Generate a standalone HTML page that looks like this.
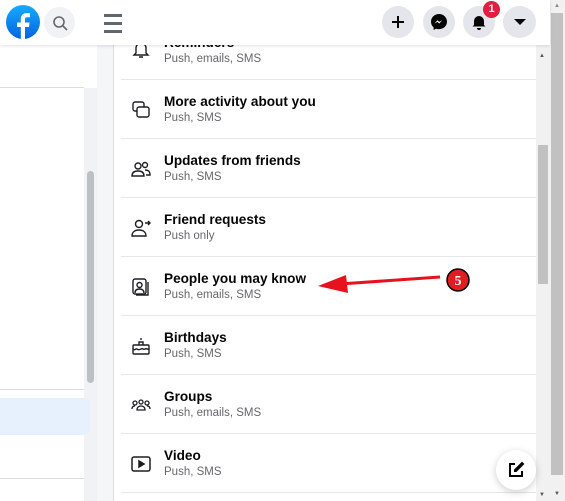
<!DOCTYPE html>
<html><head><meta charset="utf-8"><style>
*{margin:0;padding:0;box-sizing:border-box}
body{width:565px;height:501px;overflow:hidden;background:#fff;font-family:"Liberation Sans",Arial,sans-serif;position:relative}
.abs{position:absolute}
.hdr{left:0;top:0;width:550px;height:45px;background:#fff;box-shadow:0 1px 3px rgba(0,0,0,.12);z-index:5}
.cb{width:32px;height:32px;border-radius:50%;background:#e4e6eb;display:flex;align-items:center;justify-content:center;top:6px}
.row{position:absolute;left:121px;width:415px;height:59px;border-bottom:1px solid #e4e6eb}
.row .t{position:absolute;left:43px;top:14px;font-size:13.6px;font-weight:bold;color:#050505}
.row .s{position:absolute;left:43px;top:32px;font-size:11.5px;color:#65676b}
.row svg{position:absolute;left:10px;top:20px}
</style></head><body>
<div class="abs" style="left:0;top:45px;width:97px;height:456px;background:#fff"></div>
<div class="abs" style="left:0;top:87px;width:84px;height:1px;background:#dadde1"></div>
<div class="abs" style="left:84px;top:88px;width:13px;height:413px;background:#f0f2f5"></div>
<div class="abs" style="left:87px;top:171px;width:7px;height:212px;border-radius:4px;background:#bcc0c4"></div>
<div class="abs" style="left:0;top:389px;width:84px;height:1px;background:#dadde1"></div>
<div class="abs" style="left:0;top:398px;width:90px;height:37px;border-radius:0 6px 6px 0;background:#e7f0fd"></div>
<div class="abs" style="left:0;top:478px;width:84px;height:1px;background:#dadde1"></div>
<div class="abs" style="left:97px;top:45px;width:16px;height:456px;background:#f5f6f7"></div>
<div class="abs" style="left:113px;top:45px;width:1px;height:456px;background:#dadde1"></div>
<div class="row" style="top:21px"><svg width="20" height="20" viewBox="0 0 20 20" fill="none" stroke="#1c1e21" stroke-width="1.4" style="top:18px"><path d="M5 14V9a5 5 0 0110 0v5l2 2H3z M8 18h4"/></svg><div class="t">Reminders</div><div class="s">Push, emails, SMS</div></div>
<div class="row" style="top:80px"><svg width="20" height="20" viewBox="0 0 20 20" fill="none" stroke="#1c1e21" stroke-width="1.4"><rect x="2" y="2" width="11" height="9" rx="2"/><rect x="6" y="7" width="12" height="10" rx="2" fill="#fff"/></svg><div class="t">More activity about you</div><div class="s">Push, SMS</div></div>
<div class="row" style="top:139px"><svg width="20" height="20" viewBox="0 0 20 20" fill="none" stroke="#1c1e21" stroke-width="1.4"><circle cx="7" cy="7" r="3"/><path d="M1 17c0-4 3-5 6-5s6 1 6 5z"/><circle cx="14" cy="6" r="2.5"/><path d="M14 11c3 0 5 1 5 5h-4"/></svg><div class="t">Updates from friends</div><div class="s">Push, SMS</div></div>
<div class="row" style="top:198px"><svg width="20" height="20" viewBox="0 0 20 20" fill="none" stroke="#1c1e21" stroke-width="1.4"><circle cx="8" cy="6" r="3.5"/><path d="M1 18c0-4 3-6 7-6s7 2 7 6z M14 5h5 M17 3l2 2-2 2"/></svg><div class="t">Friend requests</div><div class="s">Push only</div></div>
<div class="row" style="top:257px"><svg width="20" height="20" viewBox="0 0 20 20" fill="none" stroke="#1c1e21" stroke-width="1.4"><rect x="2" y="2" width="13" height="15" rx="2"/><circle cx="8.5" cy="8" r="2.5"/><path d="M4 16c0-3 2-4 4.5-4s4.5 1 4.5 4 M17 5v13H5"/></svg><div class="t">People you may know</div><div class="s">Push, emails, SMS</div></div>
<div class="row" style="top:316px"><svg width="20" height="20" viewBox="0 0 20 20" fill="none" stroke="#1c1e21" stroke-width="1.4"><rect x="2" y="9" width="16" height="9" rx="1"/><path d="M2 13c2 2 3-1 4 0s2 1 4 0 2 1 4 0 3 1 4 0 M8 9V6h4v3 M10 2v2"/></svg><div class="t">Birthdays</div><div class="s">Push, SMS</div></div>
<div class="row" style="top:375px"><svg width="20" height="20" viewBox="0 0 20 20" fill="none" stroke="#1c1e21" stroke-width="1.3"><circle cx="4" cy="8" r="2"/><circle cx="10" cy="7" r="2"/><circle cx="16" cy="8" r="2"/><path d="M1 14c0-2 1-3 3-3M19 14c0-2-1-3-3-3M6 15c0-3 2-4 4-4s4 1 4 4z"/></svg><div class="t">Groups</div><div class="s">Push, emails, SMS</div></div>
<div class="row" style="top:434px"><svg width="20" height="20" viewBox="0 0 20 20" fill="none" stroke="#1c1e21" stroke-width="1.5"><rect x="1" y="3" width="18" height="14" rx="2"/><path d="M8 7v6l5-3z" fill="#1c1e21"/></svg><div class="t">Video</div><div class="s">Push, SMS</div></div>
<div class="abs" style="left:536px;top:45px;width:14px;height:456px;background:#f1f1f1"></div>
<div class="abs" style="left:538px;top:145px;width:10px;height:139px;background:#c1c1c1"></div>
<div class="abs" style="left:539px;top:53px;font-size:6px;color:#555">▲</div>
<div class="abs" style="left:539px;top:492px;font-size:6px;color:#555">▼</div>
<div class="abs" style="left:550px;top:0;width:15px;height:501px;background:#f1f1f1"></div>
<div class="abs" style="left:551px;top:13px;width:12px;height:462px;background:#c1c1c1"></div>
<div class="abs" style="left:554px;top:3px;font-size:6px;color:#888">▲</div>
<div class="abs" style="left:554px;top:491px;font-size:6px;color:#555">▼</div>
<svg class="abs" style="left:310px;top:262px" width="170" height="40"><path d="M130 15 L30 22" stroke="#e8121f" stroke-width="3"/><path d="M8 24 L36 13 L38 31z" fill="#e8121f"/><circle cx="148" cy="18" r="11" fill="#e31b23" stroke="#000" stroke-width="1.5"/><text x="148" y="23" font-family="Liberation Serif,serif" font-size="14" font-weight="bold" fill="#fff" text-anchor="middle">5</text></svg>
<div class="abs" style="left:496px;top:450px;width:40px;height:40px;border-radius:50%;background:#fff;box-shadow:0 2px 8px rgba(0,0,0,.2);display:flex;align-items:center;justify-content:center"><svg width="18" height="18" viewBox="0 0 18 18" fill="none" stroke="#050505" stroke-width="2"><path d="M8 3H3v12h12v-5"/><path d="M15 2l1 1-7 7H8V9z" fill="#050505"/></svg></div>
<div class="abs hdr">
 <svg class="abs" style="left:6px;top:5px" width="34" height="34" viewBox="0 0 34 34"><defs><linearGradient id="g" x1="0" y1="0" x2="0" y2="1"><stop offset="0" stop-color="#18acfe"/><stop offset="1" stop-color="#0163e0"/></linearGradient></defs><circle cx="17" cy="17" r="17" fill="url(#g)"/><path d="M19 34V22h4l.6-4.5H19v-3c0-1.3.4-2.2 2.3-2.2H24V8.3c-.5-.1-1.9-.2-3.5-.2-3.4 0-5.7 2-5.7 5.9v3.5H11V22h3.8v12z" fill="#fff"/></svg>
 <div class="abs cb" style="left:44px;width:31px;height:31px;top:7px;background:#f0f2f5"><svg width="16" height="16" viewBox="0 0 16 16" fill="none" stroke="#65676b" stroke-width="1.6"><circle cx="7" cy="7" r="5"/><path d="M11 11l4 4"/></svg></div>
 <div class="abs" style="left:104px;top:14px;width:18px;height:3px;background:#606770;box-shadow:0 8px 0 #606770,0 16px 0 #606770"></div>
 <div class="abs cb" style="left:382px;width:32px"><svg width="14" height="14" viewBox="0 0 14 14" stroke="#050505" stroke-width="2"><path d="M7 1v12M1 7h12"/></svg></div>
 <div class="abs cb" style="left:423px"><svg width="18" height="18" viewBox="0 0 18 18"><path d="M9 1C4.5 1 1 4.3 1 8.7c0 2.3 1 4.3 2.6 5.7V17l2.4-1.3c1 .3 2 .4 3 .4 4.5 0 8-3.3 8-7.5S13.5 1 9 1z" fill="#050505"/><path d="M4.5 10.5l3-3.2 1.7 1.6 3-1.6-3 3.2-1.7-1.6z" fill="#fff"/></svg></div>
 <div class="abs cb" style="left:463px"><svg width="16" height="16" viewBox="0 0 16 16" fill="#050505"><path d="M3 11V7a5 5 0 0110 0v4l1.5 1.5h-13z M6 14h4a2 2 0 01-4 0z"/></svg></div>
 <div class="abs" style="left:483px;top:1px;width:17px;height:17px;border-radius:50%;background:#e41e3f;color:#fff;font-size:11px;font-weight:bold;text-align:center;line-height:17px">1</div>
 <div class="abs cb" style="left:503px;width:33px"><svg width="12" height="8"><path d="M0 1h12L6 7z" fill="#050505"/></svg></div>
</div>
</body></html>
